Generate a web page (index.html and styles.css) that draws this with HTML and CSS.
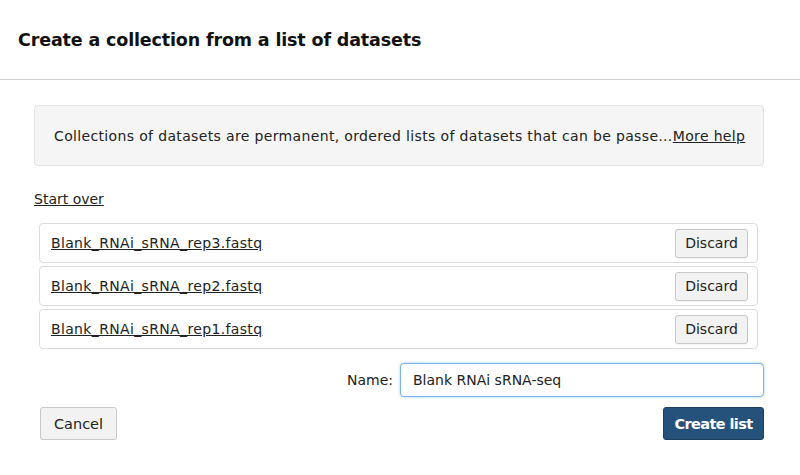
FILE: index.html
```html
<!DOCTYPE html>
<html>
<head>
<meta charset="utf-8">
<link rel="stylesheet" href="styles.css">
</head>
<body>
<div class="header">
  <h1 class="title">Create a collection from a list of datasets</h1>
</div>
<div class="content">
  <div class="help">
    <span class="help-text">Collections of datasets are permanent, ordered lists of datasets that can be passe…</span><a class="link" href="#">More help</a>
  </div>
  <div class="start"><a class="link" href="#">Start over</a></div>
  <div class="list">
    <div class="row"><a class="link file" href="#">Blank_RNAi_sRNA_rep3.fastq</a><button class="btn">Discard</button></div>
    <div class="row"><a class="link file" href="#">Blank_RNAi_sRNA_rep2.fastq</a><button class="btn">Discard</button></div>
    <div class="row"><a class="link file" href="#">Blank_RNAi_sRNA_rep1.fastq</a><button class="btn">Discard</button></div>
  </div>
  <div class="name-row">
    <label class="name-label">Name:</label>
    <input class="name-input" type="text" value="Blank RNAi sRNA-seq">
  </div>
  <div class="actions">
    <button class="btn btn-lg">Cancel</button>
    <button class="btn btn-lg btn-primary">Create list</button>
  </div>
</div>
</body>
</html>
```
FILE: styles.css
```css
html, body {
  margin: 0;
  padding: 0;
  background: #fff;
}
body {
  font-family: "DejaVu Sans", "Liberation Sans", sans-serif;
  font-size: 14px;
  color: #222;
}
.header {
  height: 79px;
  border-bottom: 1px solid #cfcfcf;
  display: flex;
  align-items: center;
  padding-left: 18px;
}
.title {
  margin: 0;
  font-size: 17.5px;
  letter-spacing: -0.15px;
  font-weight: bold;
  color: #111;
}
.content {
  padding: 25px 36px 0 34px;
}
.help {
  height: 59px;
  background: #f5f5f5;
  border: 1px solid #e3e3e3;
  border-radius: 4px;
  display: flex;
  align-items: center;
  padding-left: 19px;
  white-space: nowrap;
  letter-spacing: 0.35px;
}
.link {
  color: #222;
  text-decoration: underline;
}
.file {
  letter-spacing: 0.35px;
}
.start {
  margin-top: 23px;
  line-height: 20px;
}
.list {
  margin: 14px 6px 0 5px;
  display: flex;
  flex-direction: column;
  gap: 3px;
}
.row {
  height: 38px;
  border: 1px solid #dcdcdc;
  border-radius: 4px;
  display: flex;
  align-items: center;
  justify-content: space-between;
  padding: 0 9px 0 11px;
}
.btn {
  font-family: inherit;
  font-size: 14px;
  color: #222;
  background: #f2f2f2;
  border: 1px solid #c8c8c8;
  border-radius: 3px;
  height: 29px;
  width: 73px;
  padding: 0;
  box-shadow: 0 1px 0 rgba(0,0,0,0.04);
}
.name-row {
  margin-top: 14px;
  display: flex;
  justify-content: flex-end;
  align-items: center;
  gap: 7px;
}
.name-label {
  font-size: 14px;
}
.name-input {
  box-sizing: border-box;
  width: 364px;
  height: 34px;
  border: 1px solid #7db3e8;
  border-radius: 4px;
  box-shadow: 0 0 3px rgba(102,175,233,0.6);
  font-family: inherit;
  font-size: 14px;
  color: #222;
  padding: 0 12px;
  outline: none;
}
.actions {
  margin-top: 10px;
  display: flex;
  justify-content: space-between;
  padding-left: 6px;
}
.btn-lg {
  height: 33px;
  width: 77px;
  font-size: 14.5px;
}
.btn-primary {
  width: 101px;
  background: #25527b;
  border-color: #1c3f60;
  color: #fff;
  font-weight: bold;
  letter-spacing: -0.6px;
}
```
